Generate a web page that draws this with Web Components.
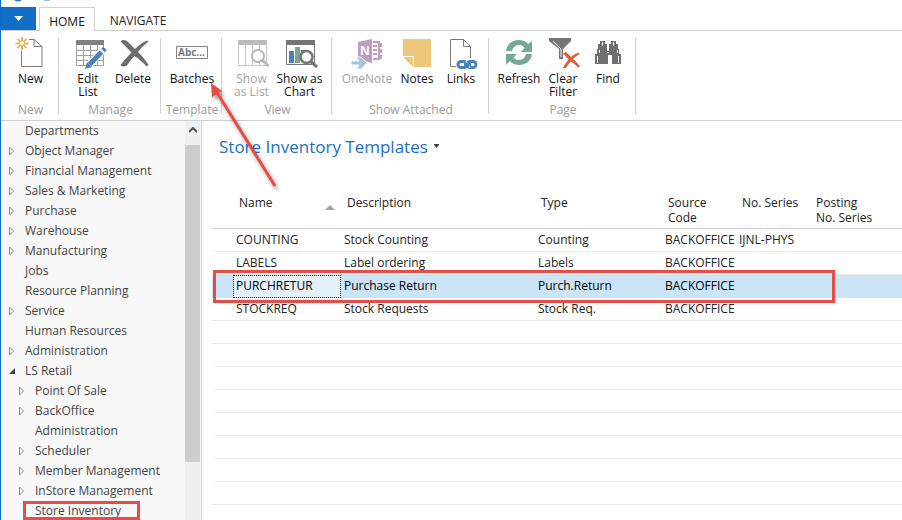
<!DOCTYPE html>
<html lang="en">
<head>
<meta charset="utf-8">
<title>Store Inventory Templates</title>
<style>
html,body{margin:0;height:100%;overflow:hidden}
body{font:12px/20px "Open Sans","Noto Sans",sans-serif;color:#222;background:#fff}
</style>
</head>
<body>
<app-window>
  <ribbon-tabs slot="tabs"></ribbon-tabs>
  <ribbon-bar slot="ribbon">
    <ribbon-group caption="New" style="--w:58px"><ribbon-button icon="new" style="--w:46px">New</ribbon-button></ribbon-group>
    <ribbon-group caption="Manage" style="--w:102px"><ribbon-button icon="edit" style="--w:45px">Edit<br>List</ribbon-button><ribbon-button icon="delete" style="--w:45px">Delete</ribbon-button></ribbon-group>
    <ribbon-group caption="Template" style="--w:61px"><ribbon-button icon="batches" style="--w:48px">Batches</ribbon-button></ribbon-group>
    <ribbon-group caption="View" style="--w:110px;--start:0px;--end:2px"><ribbon-button icon="list" off style="--w:48px">Show<br>as List</ribbon-button><ribbon-button icon="chart" style="--w:48px">Show as<br>Chart</ribbon-button></ribbon-group>
    <ribbon-group caption="Show Attached" style="--w:157px"><ribbon-button icon="onenote" off style="--w:54px">OneNote</ribbon-button><ribbon-button icon="notes" style="--w:46px">Notes</ribbon-button><ribbon-button icon="links" style="--w:42px">Links</ribbon-button></ribbon-group>
    <ribbon-group caption="Page" style="--w:147px;--start:4px"><ribbon-button icon="refresh" style="--w:46px">Refresh</ribbon-button><ribbon-button icon="clear" style="--w:42px">Clear<br>Filter</ribbon-button><ribbon-button icon="find" style="--w:48px">Find</ribbon-button></ribbon-group>
  </ribbon-bar>
  <nav-tree slot="nav">
    <nav-item>Departments</nav-item>
    <nav-item state="closed">Object Manager</nav-item>
    <nav-item state="closed">Financial Management</nav-item>
    <nav-item state="closed">Sales &amp; Marketing</nav-item>
    <nav-item state="closed">Purchase</nav-item>
    <nav-item state="closed">Warehouse</nav-item>
    <nav-item state="closed">Manufacturing</nav-item>
    <nav-item>Jobs</nav-item>
    <nav-item>Resource Planning</nav-item>
    <nav-item state="closed">Service</nav-item>
    <nav-item>Human Resources</nav-item>
    <nav-item state="closed">Administration</nav-item>
    <nav-item state="open">LS Retail</nav-item>
    <nav-item child state="closed">Point Of Sale</nav-item>
    <nav-item child state="closed">BackOffice</nav-item>
    <nav-item child>Administration</nav-item>
    <nav-item child state="closed">Scheduler</nav-item>
    <nav-item child state="closed">Member Management</nav-item>
    <nav-item child state="closed">InStore Management</nav-item>
    <nav-item child marked>Store Inventory</nav-item>
  </nav-tree>
  <list-page slot="page" heading="Store Inventory Templates"><template-table></template-table></list-page>
</app-window>
<script>
const doc = 'fill="none" stroke="#7a7a7a"';
const rays = [0,45,90,135].map(a=>`<path d="M7 0V13" transform="rotate(${a} 7 6.5)"/>`).join('');
const chainLink = x => `<rect x="${x}" y="24.5" width="9" height="6" rx="3"/>`;
const ICONS = {
  new:`<path ${doc} d="M14 2.500h5l8 7V29.500H6.500V14M19 2.500v7h8"/><g stroke="#e5b55c" stroke-width="2">${rays}</g><circle cx="7" cy="6.500" r="2.500" fill="#fff" stroke="#e5b55c"/>`,
  edit:`<path fill="#808080" d="M4 3h28v5H4z"/><path fill="none" stroke="#a0a0a0" d="M4.500 8v20.500h27V8M4 13.500h28M4 18.500h28M4 23.500h28M11.500 8v20M18.500 8v20M25.500 8v20"/><path d="M31 13 17 28" stroke="#fff" stroke-width="7"/><path d="M29.500 15 17.500 27.500" stroke="#4a80bd" stroke-width="5"/><path d="M33 11.500 31 13.500" stroke="#4a80bd" stroke-width="5"/><path fill="#4a80bd" d="m15 25-2 7 7-2z"/>`,
  delete:`<path fill="#6d6d6d" d="M3.500 4.500C6 2 9 3 11 5l7 7c3-3 7-6.500 12-8.500l1.500 1C27 8 23.500 11.500 21 15c4 4 8 8.500 10.500 13l-2 1.500C26 25.500 22 22 17.500 19c-4 4-6.500 8-8 10L5 29.500 3.500 28C7 23 11 19 14.500 15.500 11 12 7.500 8 3.500 4.500z"/>`,
  batches:`<path fill="#fff" stroke="#858585" d="M.5 9.500h31v12H.5z"/><text x="2" y="19" font-size="10" font-weight="700" fill="#777">Abc...</text>`,
  list:`<path fill="#bcbcbc" d="M2 3h29v5H2z"/><path fill="none" stroke="#c4c4c4" d="M2.500 8v20.500h28V8M9.500 8v20M16.500 8v20M23.500 8v20"/><circle cx="22" cy="19" r="6" fill="#fff" stroke="#b8b8b8" stroke-width="2"/><path stroke="#b8b8b8" stroke-width="3" d="m26 23 6.500 6"/>`,
  chart:`<path fill="#fff" stroke="#757575" d="M2.500 7.500h28v20h-28z"/><path fill="#757575" d="M2 3h29v5H2z"/><path fill="#4a80bd" d="M5 14h5v12H5z"/><path fill="#78a895" d="M11 10h5v16h-5z"/><path fill="#757575" d="M17 13h5v12h-5z"/><circle cx="22.500" cy="20" r="6" fill="#fff" stroke="#757575" stroke-width="2.500"/><path stroke="#757575" stroke-width="3" d="m26 24 7 6"/>`,
  onenote:`<path fill="#c19bc4" d="m7 5 14-3v24l-14-4z"/><text x="9" y="18" font-size="12" font-weight="700" fill="#fff">N</text><path fill="none" stroke="#c19bc4" stroke-width="2" d="M22 5h6v17h-6M22 9h4M22 13h4M22 17h4M30 6v4M30 12v4M30 18v4"/><path fill="#a3c4e2" stroke="#fff" d="M0 24h8l-3-4h5l6 6-6 6H5l3-4H0z"/>`,
  notes:`<path fill="#edc77a" d="M2 2h28v28H13V19H2z"/><path fill="#edc77a" d="M2 20h10v10z"/><path fill="none" stroke="#fff" d="M2 19.500h10.500V30"/>`,
  links:`<path ${doc} d="M12 29.500H5.500v-27h13l7 7V21M18.500 2.500v7h7"/><path fill="#fff" d="M11 22h21v10H11z"/><g fill="none" stroke="#4a80bd" stroke-width="3">${chainLink(13)}${chainLink(22)}</g><path stroke="#fff" d="m21 24 4 7"/><path stroke="#4a80bd" stroke-width="3" d="M19 27.500h7"/>`,
  refresh:`<g fill="#78a998"><path d="M3 14C4 7 9 3 16 3c4 0 7 1.500 9 4l4-3v11H18l3.500-4C20 8.500 18 8 16 8c-4 0-6 3-7 6z"/><path d="M29 17c-1 7-6 11-13 11-4 0-7-1.500-9-4l-4 4V17h11l-3.500 3.500C12 22.500 14 23 16 23c4 0 6-3 7-6z"/></g>`,
  clear:`<path fill="#757575" d="M2 1h22v3l-8 8v10h-4V12L2 4z"/><path fill="none" stroke="#fff" d="m6 4 8 8v8"/><path fill="#d9603f" d="M16 16.500 19 15c2 1.500 3.500 3.500 5 5 2-2 5-4 8-4l1 1c-3 1-5 3-7 5 2.500 2 5 4.500 7 7.500l-2 1c-2-2.500-4.500-4-7-6-2 2-3.500 4-5 6.500H16c1.500-3.500 3.500-6 5.500-8.500z"/>`,
  find:`<path fill="#6f6f6f" d="M8 4h5v3h2v7h2V7h2V4h5v3h2v5h1v5h2v10h-9V18h-4v9H3V17h2v-5h1V7h2z"/><path fill="none" stroke="#fff" d="M10.500 5v4M21.500 5v4M7.500 13v3M25.500 13v3M5.500 19v7M26.500 19v7M15 15.500h2"/>`
};
const define = (name, render) => customElements.define(name, class extends HTMLElement {
  connectedCallback(){
    if(this.shadowRoot) return;
    this.attachShadow({mode:'open'}).innerHTML = render(this);
  }
});

define('app-window', () => `<style>
:host{display:flex;flex-direction:column;height:100vh;position:relative;border-left:1px solid #0a6cc4;box-sizing:border-box;overflow:hidden}
.body{flex:1;display:flex;min-height:0}
.pointer{position:absolute;left:199px;top:74px;pointer-events:none;filter:drop-shadow(2px 3px 2px #0006)}
</style><slot name="tabs"></slot><slot name="ribbon"></slot>
<div class="body"><slot name="nav"></slot><slot name="page"></slot></div>
<svg class="pointer" width="90" height="120" aria-hidden="true"><path d="M75 112 16 17" stroke="#e84c46" stroke-width="3"/><path d="M11 9 12 23 22 17z" fill="#e84c46"/></svg>`);

define('ribbon-tabs', () => `<style>
:host{display:block;flex:none;border-bottom:1px solid #d0d0d0}
.quick{display:block;height:7px}
nav{display:flex;height:23px;align-items:stretch}
button{font:inherit;font-size:12px;color:#222;background:none;border:0;padding:4px 0 0;margin:0}
.file{width:35px;background:#0f6fc6;padding:0;margin-right:3px}
.file svg{display:block;margin:auto}
.home{width:56px;box-sizing:border-box;border:1px solid #d0d0d0;border-bottom:0;background:#fff;margin-bottom:-1px;color:#111}
.nav{width:86px}
</style><svg class="quick" width="60" height="7" aria-hidden="true"><path fill="#2e76c0" d="M13 0h8q-4 3-8 0z"/><path fill="#94bbe2" d="M43 0h6v1h-6z"/></svg>
<nav><button class="file" aria-label="File"><svg width="9" height="5"><path fill="#fff" d="M0 0h9L4.500 5z"/></svg></button><button class="home">HOME</button><button class="nav">NAVIGATE</button></nav>`);

define('ribbon-bar', () => `<style>:host{display:flex;flex:none;height:90px;padding-top:7px;box-sizing:border-box;border-bottom:1px solid #d0d0d0}</style><slot></slot>`);

define('ribbon-group', el => `<style>
:host{display:flex;flex-direction:column;width:var(--w);height:76px;box-sizing:border-box;border-right:1px solid #d0d0d0}
.row{display:flex;flex:none;justify-content:center;height:65px;padding-left:var(--start,2px);padding-right:var(--end,0px)}
.cap{flex:none;color:#9a9a9a;text-align:center;line-height:14px;padding-left:2px;white-space:nowrap}
</style><div class="row"><slot></slot></div><div class="cap">${el.getAttribute('caption')}</div>`);

define('ribbon-button', el => { const off = el.hasAttribute('off'); return `<style>
:host{display:block;width:var(--w)}
button{display:flex;flex-direction:column;align-items:center;width:100%;font:inherit;line-height:13px;color:#111;background:none;border:0;padding:0;white-space:nowrap}
button:disabled{color:#a3a3a3}
svg{display:block;overflow:visible;margin-bottom:2px}
</style><button ${off?'disabled':''}><svg width="32" height="32" viewBox="0 1 32 32" aria-hidden="true">${ICONS[el.getAttribute('icon')]}</svg><span><slot></slot></span></button>`; });

define('nav-tree', () => `<style>
:host{display:flex;flex:none;width:201px;box-sizing:border-box;border-right:1px solid #d0d0d0;background:#f8f8f8}
nav{flex:1}
.bar{width:15px;display:flex;flex-direction:column;background:#f0f0f0;margin-right:1px}
button{border:0;background:none;padding:0;height:24px}
button svg{display:block;margin:0 auto 6px}
.thumb{flex:317;background:#cdcdcd}.rest{flex:58}
</style><nav aria-label="Departments"><slot></slot></nav><div class="bar"><button aria-label="Scroll up"><svg width="8" height="6"><path d="M0 5 4 1l4 4" fill="none" stroke="#505050" stroke-width="2"/></svg></button><div class="thumb"></div><div class="rest"></div></div>`);

define('nav-item', el => { const s = el.getAttribute('state'); return `<style>
:host{display:flex;align-items:center;height:20px;padding-left:8px;color:#444;position:relative;white-space:nowrap}
:host([child]){padding-left:18px}
svg{width:16px;height:10px;flex:none}
a{color:inherit;text-decoration:none}
:host([marked])::after{content:"";position:absolute;left:22px;top:0;width:117px;height:19px;box-sizing:border-box;border:3px solid #e84c46}
</style><svg aria-hidden="true">${s==='closed'?'<path d="M.5 1 4.500 5 .5 9z" fill="#fff" stroke="#8a8a8a"/>':s==='open'?'<path d="M6 2v6H0z" fill="#444"/>':''}</svg><a href="#"><slot></slot></a>`; });

define('list-page', el => `<style>
:host{display:block;flex:1;min-width:0;padding:14px 0 0 10px;overflow:hidden}
header{display:flex;align-items:center;padding-left:7px;height:24px;margin-bottom:29px;color:#1b70c1}
h1{font-size:17px;line-height:24px;font-weight:400;margin:0}
button{border:0;background:none;padding:0;margin-left:6px;display:flex}
</style><header><h1>${el.getAttribute('heading')}</h1><button aria-label="Page menu"><svg width="5" height="6"><path d="M0 0h5v1L2.500 4 0 1z" fill="#444"/></svg></button></header><slot></slot>`);

const ROWS = [
  ['COUNTING','Stock Counting','Counting','BACKOFFICE','IJNL-PHYS',''],
  ['LABELS','Label ordering','Labels','BACKOFFICE','',''],
  ['PURCHRETUR','Purchase Return','Purch.Return','BACKOFFICE','',''],
  ['STOCKREQ','Stock Requests','Stock Req.','BACKOFFICE','','']
];
for(let i=0;i<8;i++) ROWS.push(['','','','','','']);
define('template-table', () => `<style>
:host{display:block;position:relative}
table{width:100%;table-layout:fixed;border-collapse:separate;border-spacing:0}
th{font-weight:400;text-align:left;vertical-align:top;height:33px;line-height:15px;padding:7px 0 0 6px;border-bottom:1px solid #cfcfcf;white-space:nowrap}
td{height:22px;line-height:20px;padding:0 0 0 3px;border-bottom:1px solid #ececec;white-space:nowrap}
.sort{display:flex;justify-content:space-between;padding-right:6px}
.sort svg{margin-top:10px}
.on td{background:#cce4f7;color:#000;border-color:#cce4f7}
.on td.focus{background:#e4f1fb;outline:1px dotted #222;outline-offset:-1px}
.mark{position:absolute;left:1px;top:82px;width:622px;height:33px;box-sizing:border-box;border:3px solid #e84c46;pointer-events:none}
</style><table><colgroup><col style="width:21px"><col style="width:108px"><col style="width:194px"><col style="width:127px"><col style="width:74px"><col style="width:74px"><col></colgroup>
<thead><tr><th></th><th><span class="sort">Name<svg width="10" height="5" aria-label="Ascending"><path d="M0 5 5 0l5 5z" fill="#a0a0a0"/></svg></span></th><th>Description</th><th>Type</th><th>Source<br>Code</th><th>No. Series</th><th>Posting<br>No. Series</th></tr></thead>
<tbody>${ROWS.map((r,i)=>`<tr class="${i===2?'on':''}"><td></td>${r.map((c,j)=>`<td${i===2&&j===0?' class="focus"':''}>${c}</td>`).join('')}</tr>`).join('')}</tbody></table><div class="mark"></div>`);
</script>
</body>
</html>
